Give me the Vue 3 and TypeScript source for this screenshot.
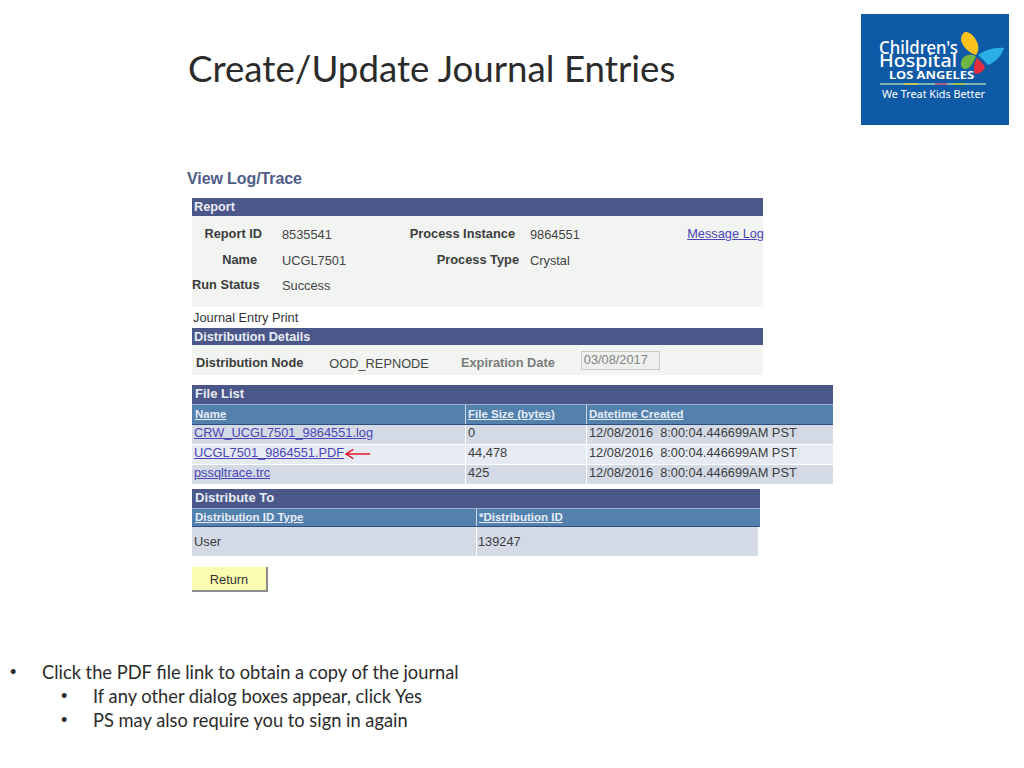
<template>
  <div class="slide">
    <header class="slide-head">
      <h1 class="slide-title">Create/Update Journal Entries</h1>
      <svg class="logo" viewBox="0 0 148 111" role="img" aria-label="Children's Hospital Los Angeles">
        <rect width="148" height="111" fill="#0f5aa6" />
        <text x="18" y="40" class="logo-big" textLength="79" lengthAdjust="spacingAndGlyphs">Children's</text>
        <text x="18" y="53" class="logo-big" textLength="78" lengthAdjust="spacingAndGlyphs">Hospital</text>
        <text x="28" y="65" class="logo-mid" textLength="85" lengthAdjust="spacingAndGlyphs">LOS ANGELES</text>
        <path d="M104 18C100 20 99 26 101 29C104 35 109 39 115 41C118 37 118 32 116 28C114 23 109 17 104 18Z" fill="#fbc21b" />
        <path d="M115 42C110 40 105 40 102 44C99 48 99 53 103 55C108 56 113 49 115 42Z" fill="#6fb544" />
        <path d="M117 41C124 36 134 33 143 34C141 41 135 48 127 51C124 47 120 44 117 41Z" fill="#29aee6" />
        <path d="M116 44C119 47 122 49 124 53C123 57 119 60 114 60C112 55 113 49 116 44Z" fill="#e42d3f" />
        <rect x="19" y="69" width="106" height="2" fill="#7fb2b5" />
        <rect x="43" y="69" width="14" height="2" fill="#c7c35a" />
        <rect x="74" y="69" width="12" height="2" fill="#b05a8a" />
        <rect x="92" y="69" width="12" height="2" fill="#9fc04a" />
        <text x="21" y="84" class="logo-tag" textLength="103" lengthAdjust="spacingAndGlyphs">We Treat Kids Better</text>
      </svg>
    </header>

    <section class="capture">
      <h2 class="capture-title">View Log/Trace</h2>

      <div class="panel">
        <div class="bar">Report</div>
        <div class="report-body">
          <span class="lbl">Report ID</span><span class="val">8535541</span>
          <span class="lbl inst">Process Instance</span><span class="val val-b">9864551</span>
          <a class="link msg">Message Log</a>
          <span class="lbl name">Name</span><span class="val">UCGL7501</span>
          <span class="lbl">Process Type</span><span class="val val-b">Crystal</span>
          <span></span>
          <span class="lbl status">Run Status</span><span class="val">Success</span>
        </div>
        <div class="journal">Journal Entry Print</div>
        <div class="bar bar-thin">Distribution Details</div>
        <div class="dist-body">
          <span class="lbl">Distribution Node</span>
          <span class="val node">OOD_REPNODE</span>
          <span class="lbl muted">Expiration Date</span>
          <span class="date">03/08/2017</span>
        </div>
      </div>

      <div class="file-list">
        <div class="bar bar-tall">File List</div>
        <div class="file-grid head">
          <a>Name</a><a>File Size (bytes)</a><a>Datetime Created</a>
        </div>
        <div v-for="(file, i) in files" :key="file.name" class="file-grid row" :class="{ alt: i === 1 }">
          <span class="name-cell">
            <a class="link">{{ file.name }}</a>
            <svg v-if="i === 1" class="arrow" viewBox="0 0 28 12">
              <path d="M1 6H27M9 1L1 6L9 11" fill="none" stroke="#e8192c" stroke-width="1.4" />
            </svg>
          </span>
          <span>{{ file.size }}</span>
          <span class="created">{{ file.created }}</span>
        </div>
      </div>

      <div class="dist-to">
        <div class="bar bar-tall">Distribute To</div>
        <div class="dist-grid head">
          <a>Distribution ID Type</a><a>*Distribution ID</a>
        </div>
        <div class="dist-grid row user">
          <span>User</span><span>139247</span>
        </div>
      </div>

      <button class="return-btn" type="button">Return</button>
    </section>

    <ul class="notes">
      <li>
        Click the PDF file link to obtain a copy of the journal
        <ul>
          <li>If any other dialog boxes appear, click Yes</li>
          <li>PS may also require you to sign in again</li>
        </ul>
      </li>
    </ul>
  </div>
</template>

<script setup lang="ts">
interface LogFile {
  name: string
  size: string
  created: string
}

const stamp = '12/08/2016\u00a0\u00a08:00:04.446699AM PST'

const files: LogFile[] = [
  { name: 'CRW_UCGL7501_9864551.log', size: '0', created: stamp },
  { name: 'UCGL7501_9864551.PDF', size: '44,478', created: stamp },
  { name: 'pssqltrace.trc', size: '425', created: stamp }
]
</script>

<style>
html, body { background: #fff; }
</style>

<style scoped>
.slide {
  width: 1024px;
  height: 768px;
  overflow: hidden;
  background: #fff;
  font-family: "Liberation Sans", Arial, sans-serif;
  color: #333;
}

.slide-head {
  display: flex;
  justify-content: space-between;
  align-items: flex-start;
  height: 125px;
  padding: 14px 15px 0 188px;
  box-sizing: border-box;
}

.slide-title {
  margin: 28px 0 0;
  font-family: Lato, sans-serif;
  font-size: 36.7px;
  line-height: 52px;
  font-weight: 400;
  color: #2b2b2b;
}

.logo { width: 148px; height: 111px; flex: none; }
.logo-big { font: 500 18px "Noto Sans", sans-serif; fill: #fff; }
.logo-mid { font: 700 10.5px "Noto Sans", sans-serif; fill: #fff; }
.logo-tag { font: 400 10px "Noto Sans", sans-serif; fill: #fff; }

.capture {
  height: 500px;
  padding: 45px 0 0 192px;
  box-sizing: border-box;
  font-size: 12.8px;
}

.capture-title {
  margin: 0 0 10px -5px;
  font-size: 16px;
  line-height: 18px;
  font-weight: 700;
  letter-spacing: -0.1px;
  color: #4f5c86;
}

.bar {
  height: 18px;
  line-height: 18px;
  padding-left: 2px;
  background: #4a5788;
  color: #e8ecf4;
  font-weight: 700;
  font-size: 12.7px;
}

.bar-thin { height: 17px; line-height: 18px; }
.bar-tall { height: 19px; line-height: 18px; padding-left: 3px; font-size: 13px; }

.panel { width: 571px; }

.report-body {
  display: grid;
  grid-template-columns: 70px 120px 137px 141px 103px;
  grid-template-rows: repeat(3, 25.5px);
  height: 91px;
  padding-top: 5px;
  box-sizing: border-box;
  background: #f2f4f2;
  align-items: center;
}

.lbl { font-weight: 700; color: #3c3c3c; white-space: nowrap; }
.report-body .lbl { text-align: right; }
.report-body .val { padding: 2px 0 0 20px; }
.report-body .val-b { padding-left: 11px; }
.inst { margin-right: 4px; }
.name { margin-right: 5px; }
.status { margin-right: 3px; }
.val { color: #444; white-space: nowrap; }
.muted { color: #7c7c7c; }

.link { color: #4a46b8; text-decoration: underline; white-space: nowrap; }
.msg { justify-self: end; margin-right: -1px; }

.journal {
  height: 21px;
  line-height: 21px;
  color: #333;
  padding-left: 1px;
}

.dist-body {
  display: flex;
  align-items: center;
  height: 30px;
  padding: 4px 0 0 4px;
  box-sizing: border-box;
  background: #f2f4f2;
}

.node { margin-left: 26px; padding-top: 2px; }
.dist-body .muted { margin-left: 32px; }

.date {
  width: 79px;
  height: 19px;
  line-height: 16px;
  margin: -3px 0 0 26px;
  padding-left: 2px;
  box-sizing: border-box;
  border: 1px solid #c9c9c9;
  background: #eef0ee;
  color: #858585;
}

.file-list { width: 641px; margin-top: 10px; }
.dist-to { width: 568px; margin-top: 4px; }

.file-grid { display: grid; grid-template-columns: 273px 121px 247px; }
.dist-grid { display: grid; grid-template-columns: 284px 284px; }

.head {
  height: 21px;
  background: #5480ae;
  border-top: 1px solid #9db5d2;
  border-bottom: 1px solid #2f4f80;
  box-sizing: border-box;
  font-weight: 700;
  font-size: 11.5px;
  line-height: 19px;
}

.dist-grid.head { height: 19px; line-height: 17px; }

.head a {
  padding-left: 2px;
  color: #e6edf6;
  text-decoration: underline;
  border-left: 1px solid #cdd9e8;
}

.head a:first-child { padding-left: 3px; border-left: 0; }

.row {
  height: 20px;
  line-height: 16px;
  background: #d3dae6;
  color: #3c3c3c;
  border-bottom: 1px solid #fff;
  box-sizing: border-box;
}

.row.alt { background: #e6eaf3; }

.row > span { padding-left: 2px; border-left: 1px solid #fff; white-space: nowrap; }
.row > span:first-child { border-left: 0; }

.name-cell { display: flex; align-items: flex-start; }
.arrow { width: 26px; height: 12px; margin: 3px 0 0 1px; flex: none; }

.row.user { height: 29px; line-height: 29px; width: 566px; border-bottom: 0; }
.row.user > span:last-child { padding-left: 1px; }

.return-btn {
  display: block;
  width: 76px;
  height: 25px;
  margin-top: 11px;
  padding: 1px 0 0;
  border: 0;
  border-right: 2px solid #8c8c8c;
  border-bottom: 2px solid #8c8c8c;
  background: #fbfcb0;
  font: 12.8px "Liberation Sans", Arial, sans-serif;
  color: #333;
}

.notes {
  margin: 35px 0 0;
  padding: 0 0 0 42px;
  list-style: none;
  font-family: Lato, sans-serif;
  font-size: 18.3px;
  line-height: 24px;
  color: #2b2b2b;
}

.notes li { position: relative; }

.notes li::before {
  content: "•";
  position: absolute;
  left: -32px;
  font-family: "Liberation Sans", Arial, sans-serif;
}

.notes ul { margin: 0; padding: 0 0 0 51px; list-style: none; }
</style>
